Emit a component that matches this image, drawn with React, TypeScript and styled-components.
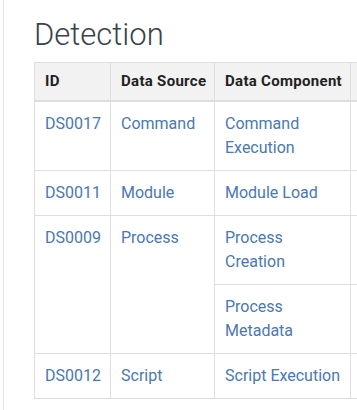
import React from "react";
import styled, { createGlobalStyle } from "styled-components";

const GlobalStyle = createGlobalStyle`
	html, body {
		margin: 0;
		padding: 0;
		background: #fff;
		font-family: Roboto, "Liberation Sans", sans-serif;
	}
`;

type Component = { name: string };
type Row = { id: string; source: string; components: Component[] };

const ROWS: Row[] = [
	{ id: "DS0017", source: "Command", components: [{ name: "Command Execution" }] },
	{ id: "DS0011", source: "Module", components: [{ name: "Module Load" }] },
	{
		id: "DS0009",
		source: "Process",
		components: [{ name: "Process Creation" }, { name: "Process Metadata" }],
	},
	{ id: "DS0012", source: "Script", components: [{ name: "Script Execution" }] },
];

const Detection = () => {
	return (
		<Page>
			<GlobalStyle />
			<Main>
				<Title>Detection</Title>
				<Table>
					<colgroup>
						<col style={{ width: 76 }} />
						<col style={{ width: 104 }} />
						<col style={{ width: 136 }} />
						<col style={{ width: 200 }} />
					</colgroup>
					<thead>
						<tr>
							<HeadCell>ID</HeadCell>
							<HeadCell>Data Source</HeadCell>
							<HeadCell>Data Component</HeadCell>
							<HeadCell />
						</tr>
					</thead>
					<tbody>
						{ROWS.map((row) =>
							row.components.map((comp, idx) => (
								<tr key={row.id + idx}>
									{idx === 0 ? (
										<>
											<Cell rowSpan={row.components.length}>
												<Link href="#">{row.id}</Link>
											</Cell>
											<Cell rowSpan={row.components.length}>
												<Link href="#">{row.source}</Link>
											</Cell>
										</>
									) : null}
									<Cell>
										<Link href="#">{comp.name}</Link>
									</Cell>
									<Cell />
								</tr>
							))
						)}
					</tbody>
				</Table>
			</Main>
		</Page>
	);
};

export default Detection;

const Page = styled.div`
	width: 357px;
	height: 410px;
	overflow: hidden;
	padding-left: 3px;
	box-sizing: border-box;
`;

const Main = styled.div`
	border-left: 1px solid #e3e3e3;
	padding-left: 30px;
	padding-top: 16px;
	height: 100%;
	box-sizing: border-box;
`;

const Title = styled.h2`
	margin: 0 0 9px;
	font-size: 31px;
	line-height: 37px;
	font-weight: 300;
	color: #39424b;
`;

const Table = styled.table`
	border-collapse: collapse;
	table-layout: fixed;
	width: 516px;
	border: 1px solid #dedede;
`;

const HeadCell = styled.th`
	text-align: left;
	background: #f2f2f2;
	color: #222;
	font-size: 15px;
	letter-spacing: 0.3px;
	font-weight: 700;
	line-height: 21px;
	padding: 8px 10px;
	border: 1px solid #dedede;
	border-bottom: 2px solid #dedede;
	white-space: nowrap;
	vertical-align: top;
`;

const Cell = styled.td`
	font-size: 16px;
	line-height: 24px;
	padding: 10px 10px;
	border: 1px solid #dedede;
	vertical-align: top;
`;

const Link = styled.a`
	color: #4a78b0;
	text-decoration: none;
`;
